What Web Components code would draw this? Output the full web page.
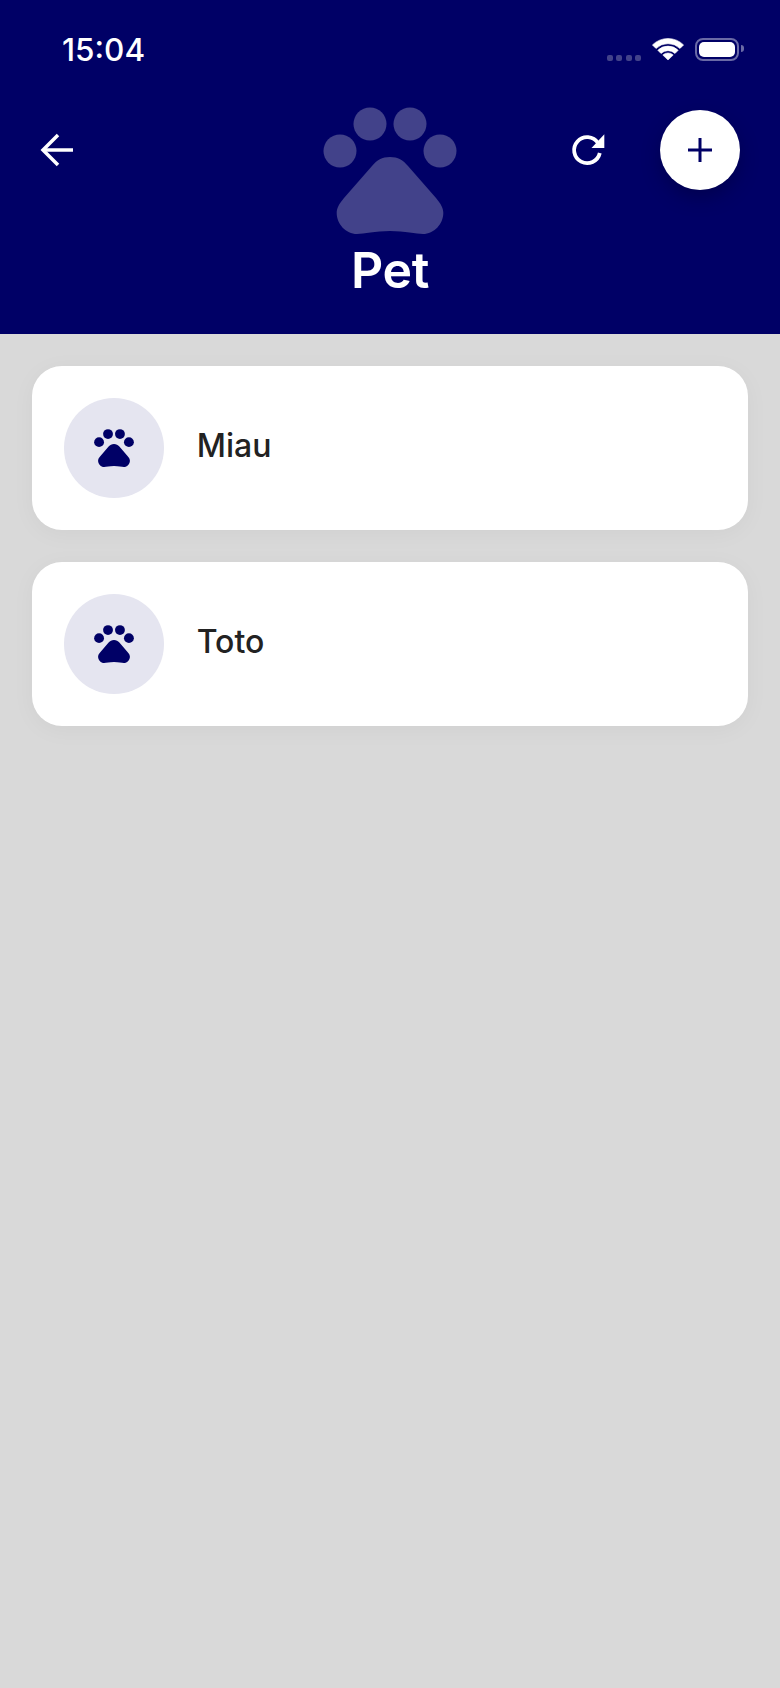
<!DOCTYPE html>
<html lang="en">
<head>
<meta charset="utf-8">
<title>Pet</title>
<style>
html, body { margin: 0; padding: 0; }
body { background: #d9d9d9; font-family: "Inter", "Liberation Sans", sans-serif; height: 1688px; overflow: hidden; }
</style>
</head>
<body>
<app-header title="Pet"></app-header>
<pet-list>
    <pet-card>Miau</pet-card>
    <pet-card>Toto</pet-card>
</pet-list>

<script>
class pawIcon extends HTMLElement {
    connectedCallback() {
        const size = this.getAttribute('size') || 40;
        this.attachShadow({mode: "open"}).innerHTML = `
        <style>
        :host { display: block; width: ${size}px; line-height: 0; }
        svg { display: block; width: 100%; height: auto; fill: currentColor; }
        </style>
        <svg viewBox="0 0 134 127">
            <circle cx="47" cy="17" r="16.5"/>
            <circle cx="87" cy="17" r="16.5"/>
            <circle cx="17" cy="44" r="16.5"/>
            <circle cx="117" cy="44" r="16.5"/>
            <path d="M67 50C75 50 80 53 85 59L113 91C118 97 120.3 101 120.3 106C120.3 117 111 127 100 127C93 127 82 124 67 124C52 124 41 127 34 127C23 127 13.7 117 13.7 106C13.7 101 16 97 21 91L49 59C54 53 59 50 67 50Z"/>
        </svg>`;
    }
}
customElements.define('paw-icon', pawIcon);

class statusBar extends HTMLElement {
    constructor() {
        super();
        this.attachShadow({mode: "open"}).innerHTML = `
        <style>
        :host {
            display: flex;
            height: 100px;
            align-items: center;
            justify-content: space-between;
            padding: 0 36px 2px 62px;
            box-sizing: border-box;
            color: #fff;
        }
        .time { font-size: 31.500px; font-weight: 500; }
        .right { display: flex; align-items: center; }
        .dots { display: flex; gap: 3.400px; margin: 17px 11px 0 0; }
        .dots i { width: 6px; height: 6px; border-radius: 2px; background: #42428a; }
        .wifi { display: block; width: 32px; height: 24px; margin-right: 11px; }
        .battery {
            position: relative;
            width: 44px;
            height: 23px;
            box-sizing: border-box;
            border: 2px solid #6a6aa6;
            border-radius: 8px;
            padding: 2px;
            margin-right: 5px;
        }
        .battery b { display: block; height: 100%; background: #fff; border-radius: 5px; }
        .battery::after {
            content: "";
            position: absolute;
            right: -6.500px;
            top: 5px;
            width: 2.500px;
            height: 7px;
            background: #6a6aa6;
            border-radius: 0 3px 3px 0;
        }
        </style>
        <span class="time">15:04</span>
        <div class="right">
            <div class="dots"><i></i><i></i><i></i><i></i></div>
            <svg class="wifi" viewBox="0 0 32 24" fill="#fff" stroke="#fff" stroke-width="0.600" stroke-linejoin="round">
                <path d="M0.400 7.900A22.200 22.200 0 0 1 31.600 7.900L28 11.500A17.300 17.300 0 0 0 4 11.500Z"/>
                <path d="M5.800 13.300A14.500 14.500 0 0 1 26.200 13.300L23 16.500A10 10 0 0 0 9 16.500Z"/>
                <path d="M16 23L10.800 18A7.600 7.600 0 0 1 21.200 18Z"/>
            </svg>
            <div class="battery"><b></b></div>
        </div>`;
    }
}
customElements.define('status-bar', statusBar);

class appHeader extends HTMLElement {
    connectedCallback() {
        this.attachShadow({mode: "open"}).innerHTML = `
        <style>
        :host {
            display: block;
            height: 334px;
            background: #000066;
            color: #fff;
        }
        .row {
            display: grid;
            grid-template-columns: 1fr auto 1fr;
            padding: 7px 40px 0;
        }
        .left, .actions { display: flex; align-items: center; height: 80px; margin-top: 3px; }
        .actions { justify-content: flex-end; gap: 54px; }
        .center { display: flex; flex-direction: column; align-items: center; }
        paw-icon { color: #42428a; }
        h1 { margin: 6px 0 0; font-size: 50px; line-height: 60px; font-weight: 600; letter-spacing: -0.3px; }
        svg { display: block; }
        .add {
            width: 80px;
            height: 80px;
            border-radius: 50%;
            background: #fff;
            display: flex;
            align-items: center;
            justify-content: center;
            box-shadow: 0 8px 18px rgba(0, 0, 40, 0.35);
        }
        </style>
        <status-bar></status-bar>
        <div class="row">
            <div class="left">
                <svg width="34" height="34" viewBox="0 0 34 34" fill="none" stroke="#fff" stroke-width="3.500">
                    <path d="M33 17H3"/>
                    <path d="M18 2L3 17L18 32"/>
                </svg>
            </div>
            <div class="center">
                <paw-icon size="134"></paw-icon>
                <h1>${this.getAttribute('title')}</h1>
            </div>
            <div class="actions">
                <svg width="36" height="36" viewBox="0 0 36 36" fill="none">
                    <path stroke="#fff" stroke-width="3.800" d="M28 11A13 13 0 1 0 29.800 21"/>
                    <path fill="#fff" d="M34.300 2.300V16H21.500Z"/>
                </svg>
                <div class="add">
                    <svg width="24" height="24" viewBox="0 0 24 24" stroke="#000066" stroke-width="3">
                        <path d="M12 0V24M0 12H24"/>
                    </svg>
                </div>
            </div>
        </div>`;
    }
}
customElements.define('app-header', appHeader);

class petList extends HTMLElement {
    constructor() {
        super();
        this.attachShadow({mode: "open"}).innerHTML = `
        <style>
        :host {
            display: flex;
            flex-direction: column;
            gap: 31.700px;
            padding: 32px;
        }
        </style>
        <slot></slot>`;
    }
}
customElements.define('pet-list', petList);

class petCard extends HTMLElement {
    constructor() {
        super();
        this.attachShadow({mode: "open"}).innerHTML = `
        <style>
        :host {
            display: flex;
            align-items: center;
            gap: 33px;
            height: 164px;
            box-sizing: border-box;
            padding: 32px;
            background: #fff;
            border-radius: 30px;
            box-shadow: 0 4px 24px rgba(0, 0, 0, 0.04);
            color: #222;
            font-size: 32px;
            font-weight: 500;
        }
        .avatar {
            width: 99.700px;
            height: 99.700px;
            border-radius: 50%;
            background: #e5e5f0;
            color: #000066;
            display: flex;
            align-items: center;
            justify-content: center;
        }
        span { padding-bottom: 5px; }
        </style>
        <div class="avatar"><paw-icon size="40"></paw-icon></div>
        <span><slot></slot></span>`;
    }
}
customElements.define('pet-card', petCard);
</script>
</body>
</html>
